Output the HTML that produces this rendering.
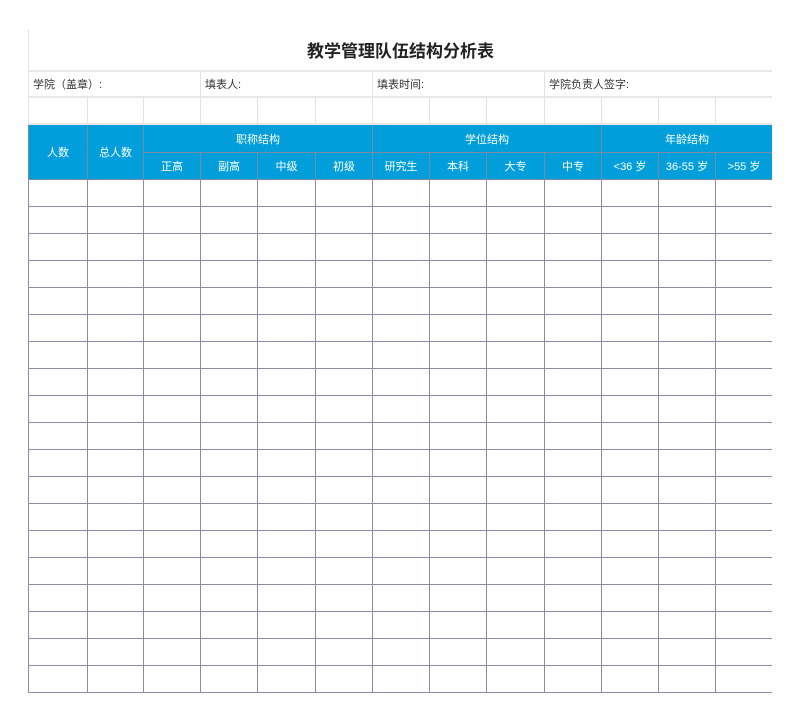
<!DOCTYPE html><html><head><meta charset="utf-8"><style>
body{margin:0;width:800px;height:713px;background:#fff;position:relative;overflow:hidden;font-family:"Liberation Sans","Noto Sans CJK SC",sans-serif}
div{position:absolute;box-sizing:border-box}
.t{font-size:11px;color:#333;display:flex;align-items:center;padding-left:4px}
.h{background:#009fdb;color:#fff;font-size:11px;display:flex;align-items:center;justify-content:center;border-right:1px solid #7a8aa0;border-bottom:1px solid #7a8aa0}
.l{border-right:1px solid #e2e2e2;border-bottom:2px solid #e8e8e8}
.d{border-right:1px solid #8c8ca4;border-bottom:1px solid #8c8ca4}
</style></head><body>
<div style="left:28px;top:29px;width:1px;height:97px;background:#e2e2e2"></div>
<div style="left:29px;top:29px;width:743px;height:43px;border-bottom:2px solid #e8e8e8;display:flex;align-items:center;justify-content:center;font-size:17px;font-weight:bold;color:#222">教学管理队伍结构分析表</div>
<div class="t l" style="left:29px;top:72px;width:172px;height:26px">学院（盖章）:</div>
<div class="t l" style="left:201px;top:72px;width:172px;height:26px">填表人:</div>
<div class="t l" style="left:373px;top:72px;width:172px;height:26px">填表时间:</div>
<div class="t" style="left:545px;top:72px;width:227px;height:26px;border-bottom:2px solid #e8e8e8">学院负责人签字:</div>
<div id="blank"></div>
<div class="h" style="left:28px;top:125px;width:60px;height:55px;border-left:1px solid #7a8aa0">人数</div>
<div class="h" style="left:88px;top:125px;width:56px;height:55px">总人数</div>
<div class="h" style="left:144px;top:125px;width:229px;height:28px">职称结构</div>
<div class="h" style="left:373px;top:125px;width:229px;height:28px">学位结构</div>
<div class="h" style="left:602px;top:125px;width:170px;height:28px;border-right:none">年龄结构</div>
<div id="sub"></div>
<div id="grid"></div>
<script>
var xs=[29,88,144,201,258,316,373,430,487,545,602,659,716,772];
var s='';
for(var i=0;i<13;i++){var w=xs[i+1]-xs[i];
 s+='<div class="l" style="left:'+xs[i]+'px;top:98px;width:'+w+'px;height:27px'+(i==12?';border-right:none':'')+'"></div>';}
document.getElementById('blank').outerHTML=s;
var names=['正高','副高','中级','初级','研究生','本科','大专','中专','&lt;36 岁','36-55 岁','&gt;55 岁'];
s='';
for(var i=2;i<13;i++){var w=xs[i+1]-xs[i];
 s+='<div class="h" style="left:'+xs[i]+'px;top:153px;width:'+w+'px;height:27px'+(i==12?';border-right:none':'')+'">'+names[i-2]+'</div>';}
document.getElementById('sub').outerHTML=s;
s='';
for(var r=0;r<19;r++)for(var i=0;i<13;i++){var w=xs[i+1]-xs[i];
 s+='<div class="d" style="left:'+(i==0?28:xs[i])+'px;top:'+(180+r*27)+'px;width:'+(i==0?w+1:w)+'px;height:27px'+(i==12?';border-right:none':'')+(i==0?';border-left:1px solid #8c8ca4':'')+'"></div>';}
document.getElementById('grid').outerHTML=s;
</script>
</body></html>
